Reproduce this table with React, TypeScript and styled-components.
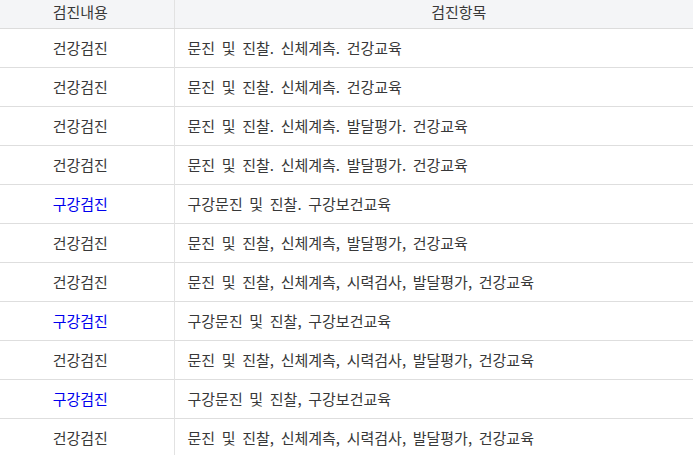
import styled, { createGlobalStyle } from 'styled-components';

const GlobalStyle = createGlobalStyle`
  html, body {
    margin: 0;
    padding: 0;
    background: #ffffff;
    overflow: hidden;
  }
  body {
    font-family: "Noto Sans CJK KR", "Noto Sans", sans-serif;
    color: #333333;
  }
`;

const StyledFrame = styled.div`
  width: 693px;
  overflow: hidden;
`;

const StyledTable = styled.table`
  width: 756px;
  margin-left: -13px;
  border-collapse: collapse;
  table-layout: fixed;
  font-size: 15px;
  line-height: 20px;
  word-spacing: 3.3px;
`;

const StyledHeadCell = styled.th`
  height: 28px;
  padding: 0 0 4px;
  box-sizing: border-box;
  background: #f4f5f7;
  font-weight: 400;
  color: #383838;
  text-align: center;
  border-bottom: 1px solid #dcdcdc;
  border-right: 1px solid #e2e2e2;

  &:last-child {
    border-right: none;
  }
`;

const StyledRow = styled.tr`
  height: 39px;
  border-bottom: 1px solid #dedede;
`;

const StyledTypeCell = styled.td<{ $oral: boolean }>`
  padding: 0;
  text-align: center;
  color: ${({ $oral }) => ($oral ? '#0000ee' : '#383838')};
  border-right: 1px solid #e2e2e2;
`;

const StyledItemCell = styled.td`
  padding: 0 0 0 13px;
  text-align: left;
  color: #383838;
`;

interface CheckupRow {
  readonly kind: string;
  readonly items: string;
}

const rows: CheckupRow[] = [
  { kind: '건강검진', items: '문진 및 진찰. 신체계측. 건강교육' },
  { kind: '건강검진', items: '문진 및 진찰. 신체계측. 건강교육' },
  { kind: '건강검진', items: '문진 및 진찰. 신체계측. 발달평가. 건강교육' },
  { kind: '건강검진', items: '문진 및 진찰. 신체계측. 발달평가. 건강교육' },
  { kind: '구강검진', items: '구강문진 및 진찰. 구강보건교육' },
  { kind: '건강검진', items: '문진 및 진찰, 신체계측, 발달평가, 건강교육' },
  { kind: '건강검진', items: '문진 및 진찰, 신체계측, 시력검사, 발달평가, 건강교육' },
  { kind: '구강검진', items: '구강문진 및 진찰, 구강보건교육' },
  { kind: '건강검진', items: '문진 및 진찰, 신체계측, 시력검사, 발달평가, 건강교육' },
  { kind: '구강검진', items: '구강문진 및 진찰, 구강보건교육' },
  { kind: '건강검진', items: '문진 및 진찰, 신체계측, 시력검사, 발달평가, 건강교육' },
];

export default function App() {
  return (
    <>
      <GlobalStyle />
      <StyledFrame>
        <StyledTable>
          <colgroup>
            <col style={{ width: 187 }} />
            <col />
          </colgroup>
          <thead>
            <tr>
              <StyledHeadCell>검진내용</StyledHeadCell>
              <StyledHeadCell>검진항목</StyledHeadCell>
            </tr>
          </thead>
          <tbody>
            {rows.map((row, i) => (
              <StyledRow key={i}>
                <StyledTypeCell $oral={row.kind === '구강검진'}>{row.kind}</StyledTypeCell>
                <StyledItemCell>{row.items}</StyledItemCell>
              </StyledRow>
            ))}
          </tbody>
        </StyledTable>
      </StyledFrame>
    </>
  );
}
